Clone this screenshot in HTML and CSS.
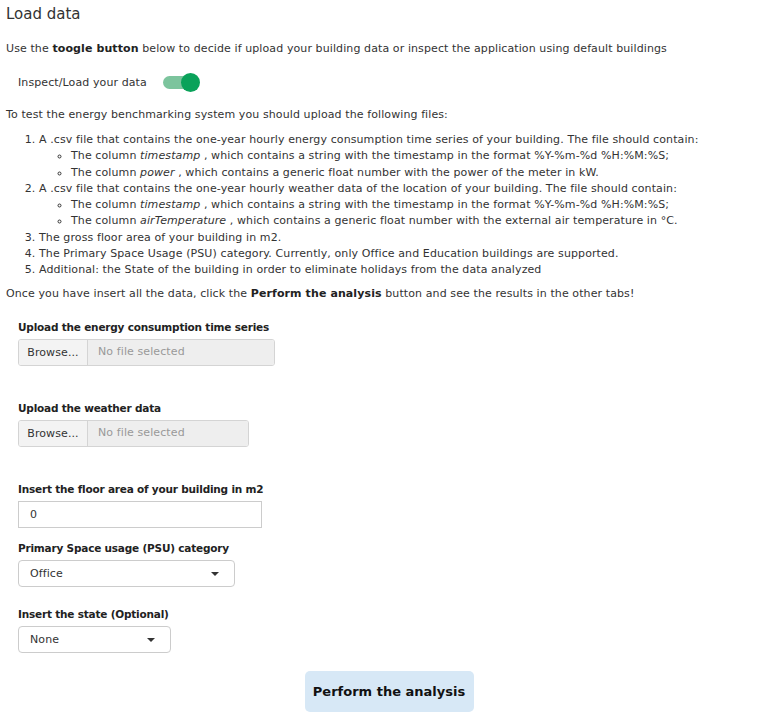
FILE: index.html
```html
<!DOCTYPE html>
<html>
<head>
    <title>Load data</title>
    <link rel="stylesheet" href="styles.css">
</head>
<body>
    <div class="page">
        <h2 class="title">Load data</h2>
        <p>Use the <b>toogle button</b> below to decide if upload your building data or inspect the application using default buildings</p>

        <div class="toggle-row">
            <span>Inspect/Load your data</span>
            <span class="toggle"><span class="knob"></span></span>
        </div>

        <p>To test the energy benchmarking system you should upload the following files:</p>
        <ol class="steps">
            <li>A .csv file that contains the one-year hourly energy consumption time series of your building. The file should contain:
                <ul>
                    <li>The column <i>timestamp</i> , which contains a string with the timestamp in the format %Y-%m-%d %H:%M:%S;</li>
                    <li>The column <i>power</i> , which contains a generic float number with the power of the meter in kW.</li>
                </ul>
            </li>
            <li>A .csv file that contains the one-year hourly weather data of the location of your building. The file should contain:
                <ul>
                    <li>The column <i>timestamp</i> , which contains a string with the timestamp in the format %Y-%m-%d %H:%M:%S;</li>
                    <li>The column <i>airTemperature</i> , which contains a generic float number with the external air temperature in °C.</li>
                </ul>
            </li>
            <li>The gross floor area of your building in m2.</li>
            <li>The Primary Space Usage (PSU) category. Currently, only Office and Education buildings are supported.</li>
            <li>Additional: the State of the building in order to eliminate holidays from the data analyzed</li>
        </ol>
        <p>Once you have insert all the data, click the <b>Perform the analysis</b> button and see the results in the other tabs!</p>

        <div class="form">
            <div class="field upload">
                <label>Upload the energy consumption time series</label>
                <div class="file wide">
                    <span class="browse">Browse...</span>
                    <span class="filename">No file selected</span>
                </div>
            </div>

            <div class="field upload">
                <label>Upload the weather data</label>
                <div class="file narrow">
                    <span class="browse">Browse...</span>
                    <span class="filename">No file selected</span>
                </div>
            </div>

            <div class="field">
                <label>Insert the floor area of your building in m2</label>
                <div class="text-input">0</div>
            </div>

            <div class="field psu-field">
                <label>Primary Space usage (PSU) category</label>
                <div class="select psu">Office <span class="caret"></span></div>
            </div>

            <div class="field">
                <label>Insert the state (Optional)</label>
                <div class="select state">None <span class="caret"></span></div>
            </div>
        </div>

        <div class="actions">
            <button>Perform the analysis</button>
        </div>
    </div>
</body>
</html>
```

FILE: styles.css
```css
body {
    margin: 0;
    font-family: "DejaVu Sans", sans-serif;
    font-size: 11px;
    letter-spacing: 0.1px;
    color: #333;
    background: #fff;
}

.page {
    padding: 4px 6px 0 6px;
}

.title {
    font-size: 15px;
    font-weight: normal;
    letter-spacing: 0;
    margin: 0 0 17px 0;
    line-height: 20px;
}

p {
    margin: 0;
    line-height: 16px;
}

b {
    color: #222;
}

.toggle-row {
    display: flex;
    align-items: center;
    gap: 16px;
    padding: 14px 0 0 12px;
    height: 22px;
    margin-bottom: 14px;
}

.toggle {
    position: relative;
    width: 30px;
    height: 13px;
    border-radius: 7px;
    background: #7cc49d;
}

.toggle .knob {
    position: absolute;
    right: -7px;
    top: -3px;
    width: 19px;
    height: 19px;
    border-radius: 50%;
    background: #0aa25a;
}

.steps {
    margin: 9px 0 7px 0;
    padding-left: 33px;
    line-height: 16.3px;
}

.steps ul {
    list-style: circle;
    padding-left: 32px;
    margin: 0;
}

.form {
    padding: 18px 0 0 12px;
}

.field {
    margin-bottom: 13px;
}

.field.upload {
    margin-bottom: 35px;
}

.field.psu-field {
    margin-bottom: 20px;
}

label {
    display: block;
    font-size: 10.5px;
    font-weight: bold;
    letter-spacing: -0.2px;
    color: #222;
    line-height: 14px;
    margin-bottom: 5px;
}

.file {
    display: flex;
    height: 27px;
    border: 1px solid #d4d4d4;
    border-radius: 3px;
    box-sizing: border-box;
    overflow: hidden;
}

.file.wide {
    width: 257px;
}

.file.narrow {
    width: 231px;
}

.browse {
    display: flex;
    align-items: center;
    justify-content: center;
    width: 68px;
    background: #f3f3f3;
    border-right: 1px solid #d4d4d4;
    color: #333;
}

.filename {
    flex: 1;
    background: #eeeeee;
    color: #999;
    padding: 5px 0 0 10px;
}

.text-input {
    width: 244px;
    height: 27px;
    box-sizing: border-box;
    border: 1px solid #ccc;
    padding: 6px 0 0 11px;
    color: #333;
}

.select {
    position: relative;
    height: 27px;
    box-sizing: border-box;
    border: 1px solid #ccc;
    border-radius: 4px;
    padding: 6px 0 0 11px;
    color: #333;
}

.select.psu {
    width: 217px;
}

.select.state {
    width: 153px;
}

.caret {
    position: absolute;
    right: 15px;
    top: 11px;
    border-left: 4px solid transparent;
    border-right: 4px solid transparent;
    border-top: 4px solid #333;
}

.actions {
    display: flex;
    justify-content: center;
    padding-top: 5px;
}

button {
    font-family: "DejaVu Sans", sans-serif;
    font-size: 13px;
    font-weight: 600;
    color: #111;
    background: #d7e8f6;
    border: none;
    border-radius: 5px;
    width: 169px;
    height: 41px;
}
```
